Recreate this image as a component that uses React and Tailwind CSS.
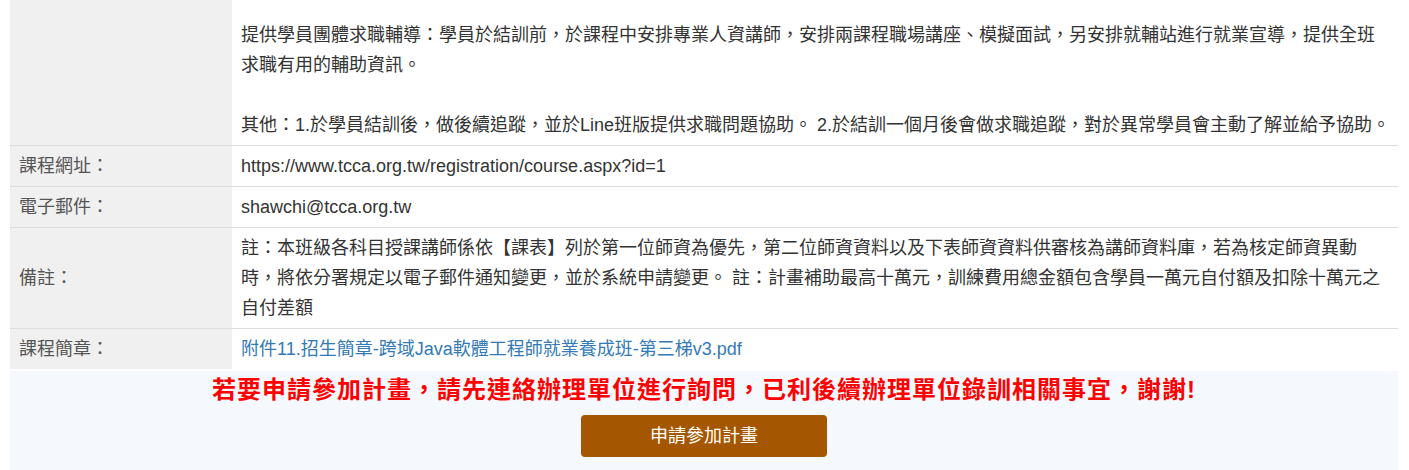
import React from "react";

const font = { fontFamily: '"Liberation Sans", "Noto Sans CJK TC", sans-serif' };

function Row({ label, children, first }) {
  return (
    <div className={"flex " + (first ? "" : "border-t border-[#dddddd]")}>
      <div className="w-[222px] shrink-0 bg-[#f0f0f0] pl-[9px] flex items-center text-[18px] leading-[30px] text-[#555555]">
        {label}
      </div>
      <div className={"flex-1 pl-[9px] pr-[6px] pb-[5px] text-[18px] leading-[30px] text-[#333333] " + (first ? "pt-[20px]" : "pt-[5px]")}>
        {children}
      </div>
    </div>
  );
}

export default function App() {
  return (
    <div className="w-[1409px] h-[470px] overflow-hidden bg-white px-[10px] pr-[11px]" style={font}>
      <div>
        <Row label="" first>
          提供學員團體求職輔導：學員於結訓前，於課程中安排專業人資講師，安排兩課程職場講座、模擬面試，另安排就輔站進行就業宣導，提供全班求職有用的輔助資訊。
          <br />
          <br />
          其他：1.於學員結訓後，做後續追蹤，並於Line班版提供求職問題協助。 2.於結訓一個月後會做求職追蹤，對於異常學員會主動了解並給予協助。
        </Row>
        <Row label="課程網址：">https://www.tcca.org.tw/registration/course.aspx?id=1</Row>
        <Row label="電子郵件：">shawchi@tcca.org.tw</Row>
        <Row label="備註：">
          註：本班級各科目授課講師係依【課表】列於第一位師資為優先，第二位師資資料以及下表師資資料供審核為講師資料庫，若為核定師資異動時，將依分署規定以電子郵件通知變更，並於系統申請變更。 註：計畫補助最高十萬元，訓練費用總金額包含學員一萬元自付額及扣除十萬元之自付差額
        </Row>
        <Row label="課程簡章：">
          <a href="#" className="text-[#337ab7]">附件11.招生簡章-跨域Java軟體工程師就業養成班-第三梯v3.pdf</a>
        </Row>
      </div>
      <div className="mt-[2px] bg-[#f5f9fe] pt-[4px] pb-[20px] flex flex-col items-center">
        <div className="text-[24px] leading-[30px] font-bold text-[#ff0000] tracking-[1px]">
          若要申請參加計畫，請先連絡辦理單位進行詢問，已利後續辦理單位錄訓相關事宜，謝謝!
        </div>
        <button className="mt-[10px] w-[246px] h-[42px] rounded-[4px] bg-[#a55600] text-white text-[18px] leading-[42px]">
          申請參加計畫
        </button>
      </div>
    </div>
  );
}
